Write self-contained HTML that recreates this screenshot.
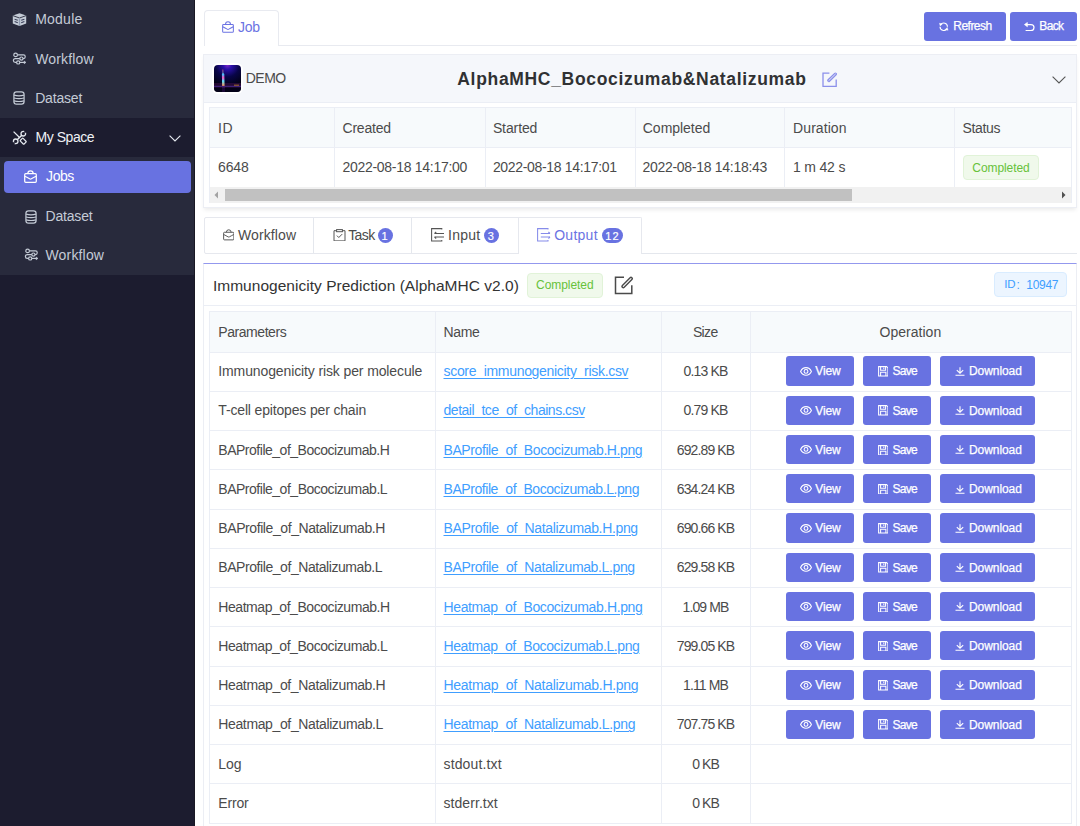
<!DOCTYPE html>
<html><head><meta charset="utf-8">
<style>
*{box-sizing:border-box;margin:0;padding:0}
html,body{width:1080px;height:826px;overflow:hidden;background:#fff;font-family:"Liberation Sans",sans-serif;color:#333;position:relative}
.abs{position:absolute}
.tx{white-space:nowrap}
.btn{background:#6872e1;border-radius:3px}
svg{display:block}
</style></head><body>
<div class="abs" style="left:0;top:0;width:195px;height:826px;background:#1c1c2f"></div>
<div class="abs" style="left:0;top:0;width:194px;height:118px;background:#282a3c"></div>
<div class="abs" style="left:0;top:157px;width:194px;height:118px;background:#282a3c"></div>
<div class="abs" style="left:4px;top:161px;width:187px;height:32px;background:#6872e1;border-radius:4px"></div>
<div class="abs" style="left:193.5px;top:0;width:1.5px;height:826px;background:#191824"></div>
<svg class="abs" style="left:12px;top:12px" width="15" height="15" viewBox="0 0 15 15">
<path d="M7.5 1.2 L14.2 3.6 V11.4 L7.5 14 L0.8 11.4 V3.6 Z" fill="#c4cbd6"/>
<path d="M0.8 3.6 L7.5 6 L14.2 3.6" stroke="#282a3c" stroke-width="0.9" fill="none"/>
<path d="M7.5 6 V14" stroke="#8f9bb0" stroke-width="1.4"/>
<path d="M2.6 7.2 L5.8 8.3 M2.6 9.6 L5.8 10.7 M9.2 8.3 L12.4 7.2 M9.2 10.7 L12.4 9.6" stroke="#3a3f5a" stroke-width="1.1" fill="none"/>
</svg>
<svg class="abs" style="left:12px;top:52px" width="15" height="14" viewBox="0 0 15 14" fill="none" stroke="#c4cbd6" stroke-width="1.2">
<circle cx="3.6" cy="2.9" r="1.8"/><path d="M5.4 2.9 H11.4 a1.85 1.85 0 0 1 0 3.7 H11"/><circle cx="9.4" cy="6.6" r="1.6"/><path d="M7.8 6.6 H3.3 a1.9 1.9 0 0 0 0 3.8 H4.6"/><circle cx="6.2" cy="10.4" r="1.6"/><path d="M7.8 10.4 H13.4"/><path d="M12.2 9 L13.9 10.4 L12.2 11.8 Z" fill="#c4cbd6" stroke-width="0.6"/>
</svg>
<svg class="abs" style="left:13px;top:91px" width="12" height="14" viewBox="0 0 12 14" fill="none" stroke="#c4cbd6" stroke-width="1.2">
<rect x="0.9" y="0.9" width="10.2" height="12.2" rx="2.6"/><path d="M1 4.2 Q6 5.6 11 4.2 M1 7 Q6 8.4 11 7 M1 9.8 Q6 11.2 11 9.8"/>
</svg>
<svg class="abs" style="left:12px;top:130px" width="15" height="15" viewBox="0 0 15 15" fill="none" stroke="#e6eaf0" stroke-width="1.3">
<path d="M1.6 1.6 L7.8 7.8" stroke-width="1.3"/>
<rect x="-2.6" y="-1.9" width="5.2" height="3.8" rx="0.6" transform="translate(11.2 11.2) rotate(45)" stroke-width="1.2"/>
<path d="M5.2 9.8 L9.8 5.2" stroke-width="1.5"/>
<circle cx="11.3" cy="3.7" r="2.3" stroke-width="1.3"/>
<circle cx="3.7" cy="11.3" r="2.3" stroke-width="1.3"/>
<path d="M12.4 2.6 L14.6 0.4 M2.6 12.4 L0.4 14.6" stroke="#1c1c2f" stroke-width="1.8"/>
</svg>
<svg class="abs" style="left:169px;top:134.5px" width="12" height="7" viewBox="0 0 12 7" fill="none" stroke="#e6eaf0" stroke-width="1.1"><path d="M0.6 0.6 L6 6 L11.4 0.6"/></svg>
<svg class="abs" style="left:24px;top:170px" width="13" height="13" viewBox="0 0 13 13" fill="none" stroke="#ffffff" stroke-width="1.25">
<rect x="0.7" y="3.7" width="11.6" height="8.6" rx="1"/><path d="M3.8 3.7 Q3.8 0.9 6.5 0.9 Q9.2 0.9 9.2 3.7"/><path d="M0.8 6.2 Q3.5 7.6 5.6 8.8 Q6.5 9.4 7.4 8.8 Q9.5 7.6 12.2 6.2"/>
</svg>
<svg class="abs" style="left:24.5px;top:209.5px" width="12" height="14" viewBox="0 0 12 14" fill="none" stroke="#c4cbd6" stroke-width="1.2">
<rect x="0.9" y="0.9" width="10.2" height="12.2" rx="2.6"/><path d="M1 4.2 Q6 5.6 11 4.2 M1 7 Q6 8.4 11 7 M1 9.8 Q6 11.2 11 9.8"/>
</svg>
<svg class="abs" style="left:24px;top:248px" width="15" height="14" viewBox="0 0 15 14" fill="none" stroke="#c4cbd6" stroke-width="1.2">
<circle cx="3.6" cy="2.9" r="1.8"/><path d="M5.4 2.9 H11.4 a1.85 1.85 0 0 1 0 3.7 H11"/><circle cx="9.4" cy="6.6" r="1.6"/><path d="M7.8 6.6 H3.3 a1.9 1.9 0 0 0 0 3.8 H4.6"/><circle cx="6.2" cy="10.4" r="1.6"/><path d="M7.8 10.4 H13.4"/><path d="M12.2 9 L13.9 10.4 L12.2 11.8 Z" fill="#c4cbd6" stroke-width="0.6"/>
</svg>
<span class="abs tx" style="left:35.20px;top:11.65px;font-size:14px;line-height:14px;color:#c4cbd6;letter-spacing:0.230px;font-weight:400;">Module</span>
<span class="abs tx" style="left:35.20px;top:51.65px;font-size:14px;line-height:14px;color:#c4cbd6;letter-spacing:0.161px;font-weight:400;">Workflow</span>
<span class="abs tx" style="left:35.20px;top:90.85px;font-size:14px;line-height:14px;color:#c4cbd6;letter-spacing:-0.179px;font-weight:400;">Dataset</span>
<span class="abs tx" style="left:35.50px;top:130.05px;font-size:14px;line-height:14px;color:#eef1f5;letter-spacing:-0.456px;font-weight:400;">My Space</span>
<span class="abs tx" style="left:46.10px;top:169.15px;font-size:14px;line-height:14px;color:#ffffff;letter-spacing:-0.445px;font-weight:400;">Jobs</span>
<span class="abs tx" style="left:45.50px;top:208.65px;font-size:14px;line-height:14px;color:#c4cbd6;letter-spacing:-0.179px;font-weight:400;">Dataset</span>
<span class="abs tx" style="left:45.50px;top:248.15px;font-size:14px;line-height:14px;color:#c4cbd6;letter-spacing:0.161px;font-weight:400;">Workflow</span>
<div class="abs" style="left:203.5px;top:9.5px;width:75px;height:36.5px;border:1px solid #e8eaf0;border-bottom:none;border-radius:4px 4px 0 0;background:#fff"></div>
<div class="abs" style="left:278px;top:45px;width:799px;height:1px;background:#e8eaf0"></div>
<svg class="abs" style="left:222px;top:21px" width="12" height="12" viewBox="0 0 13 13" fill="none" stroke="#6b73e3" stroke-width="1.1">
<rect x="0.7" y="3.7" width="11.6" height="8.6" rx="1"/><path d="M3.8 3.7 Q3.8 0.9 6.5 0.9 Q9.2 0.9 9.2 3.7"/><path d="M0.8 6.2 Q3.5 7.6 5.6 8.8 Q6.5 9.4 7.4 8.8 Q9.5 7.6 12.2 6.2"/>
</svg>
<span class="abs tx" style="left:238.10px;top:19.85px;font-size:14px;line-height:14px;color:#6b73e3;letter-spacing:-0.326px;font-weight:400;">Job</span>
<div class="abs btn" style="left:924px;top:12px;width:82px;height:29px"></div>
<svg class="abs" style="left:939.3px;top:21.8px" width="9.5" height="9.5" viewBox="0 0 10 10" fill="none" stroke="#fff" stroke-width="1.2"><path d="M1.81 2.76 A3.9 3.9 0 0 1 8.9 5"/><path d="M8.19 7.24 A3.9 3.9 0 0 1 1.1 5"/><path d="M0.4 1.3 L3.6 1.9 L1.3 4.3 Z" fill="#fff" stroke-width="0.4"/><path d="M9.6 8.7 L6.4 8.1 L8.7 5.7 Z" fill="#fff" stroke-width="0.4"/></svg>
<span class="abs tx" style="left:953.31px;top:20.04px;font-size:12px;line-height:12px;color:#fff;letter-spacing:-0.523px;font-weight:400;-webkit-text-stroke:0.25px #fff">Refresh</span>
<div class="abs btn" style="left:1009.5px;top:12px;width:67.5px;height:29px"></div>
<svg class="abs" style="left:1024px;top:21.5px" width="11" height="9.5" viewBox="0 0 11 9.5" fill="none" stroke="#fff" stroke-width="1.25"><path d="M3 2.6 H7 a3 3 0 0 1 0 6 H1.6"/><path d="M0.4 2.6 L3.4 0.4 V4.8 Z" fill="#fff" stroke-width="0.6"/></svg>
<span class="abs tx" style="left:1039.31px;top:20.04px;font-size:12px;line-height:12px;color:#fff;letter-spacing:-0.629px;font-weight:400;-webkit-text-stroke:0.25px #fff">Back</span>
<div class="abs" style="left:203px;top:54px;width:873.5px;height:153.5px;background:#fff;border:1px solid #eceef4;box-shadow:0 3px 4px -1px rgba(0,0,0,.08)"></div>
<div class="abs" style="left:204px;top:55px;width:871.5px;height:47.5px;background:#f5f7fb;border-bottom:1px solid #ebeef5"></div>
<div class="abs" style="left:212px;top:63px;width:31px;height:31px;border-radius:6px;background:#fff"></div>
<svg class="abs" style="left:214px;top:65px;border-radius:4px" width="27" height="27" viewBox="0 0 27 27">
<defs><radialGradient id="sky" cx="0.5" cy="0" r="0.8"><stop offset="0" stop-color="#7a28c8"/><stop offset="0.2" stop-color="#2a10a8"/><stop offset="0.55" stop-color="#080548"/><stop offset="1" stop-color="#020114"/></radialGradient>
<linearGradient id="tw" x1="0" y1="0" x2="0" y2="1"><stop offset="0" stop-color="#ff7070"/><stop offset="0.3" stop-color="#40c0ff"/><stop offset="0.5" stop-color="#ff50c0"/><stop offset="0.7" stop-color="#50e0ff"/><stop offset="1" stop-color="#ff9050"/></linearGradient></defs>
<rect width="27" height="27" fill="url(#sky)"/>
<rect x="0" y="18" width="27" height="5" fill="#40104a" opacity=".55"/>
<path d="M8.6 4.5 L9.2 4.5 L9.4 8 L10.3 9 L10.6 21 L8.1 21 L7.9 9 L8.5 8 Z" fill="url(#tw)"/>
<rect x="0" y="20.8" width="27" height="1" fill="#5030a0" opacity=".8"/>
<rect x="20" y="19.6" width="5" height="1.2" fill="#c08030" opacity=".7"/>
<rect x="8" y="22" width="3" height="5" fill="#6a20a0" opacity=".6"/>
<rect x="0" y="22.5" width="27" height="4.5" fill="#04021a" opacity=".65"/>
</svg>
<span class="abs tx" style="left:245.70px;top:71.35px;font-size:14px;line-height:14px;color:#4b4b4b;letter-spacing:-0.475px;font-weight:400;">DEMO</span>
<span class="abs tx" style="left:457.30px;top:70.69px;font-size:17.5px;line-height:17.5px;color:#303133;letter-spacing:0.675px;font-weight:700;">AlphaMHC_Bococizumab&amp;Natalizumab</span>
<svg class="abs" style="left:821.5px;top:72px" width="15" height="15" viewBox="0 0 15 15" fill="none" stroke="#8b90ea" stroke-width="1.3"><path d="M7.4 1.1 H1 V14.3 H14.2 V7.6"/><path d="M6.8 8.5 L13.4 2.1" stroke-width="3.2" stroke-linecap="round"/><path d="M6.8 8.5 L13.4 2.1" stroke="#f5f7fb" stroke-width="0.8" stroke-linecap="round"/></svg>
<svg class="abs" style="left:1051.5px;top:75.5px" width="14" height="8" viewBox="0 0 14 8" fill="none" stroke="#555" stroke-width="1.1"><path d="M0.6 0.6 L7 7 L13.4 0.6"/></svg>
<div class="abs" style="left:209px;top:107px;width:862.5px;height:40.30000000000001px;background:#f7fafc"></div>
<div class="abs" style="left:209px;top:107px;width:862.5px;height:96.19999999999999px;border:1px solid #ebeef5"></div>
<div class="abs" style="left:209px;top:147.3px;width:862.5px;height:1px;background:#ebeef5"></div>
<div class="abs" style="left:334.4px;top:107px;width:1px;height:79.69999999999999px;background:#ebeef5"></div>
<div class="abs" style="left:484.5px;top:107px;width:1px;height:79.69999999999999px;background:#ebeef5"></div>
<div class="abs" style="left:634.7px;top:107px;width:1px;height:79.69999999999999px;background:#ebeef5"></div>
<div class="abs" style="left:784.3px;top:107px;width:1px;height:79.69999999999999px;background:#ebeef5"></div>
<div class="abs" style="left:953.6px;top:107px;width:1px;height:79.69999999999999px;background:#ebeef5"></div>
<div class="abs" style="left:210px;top:186.7px;width:861px;height:16px;background:#f1f1f1"></div>
<div class="abs" style="left:225px;top:189px;width:626.5px;height:12px;background:#c1c1c1"></div>
<svg class="abs" style="left:213px;top:191px" width="6" height="8" viewBox="0 0 6 8"><path d="M5 0.5 L1.5 4 L5 7.5Z" fill="#a3a3a3"/></svg>
<svg class="abs" style="left:1061px;top:191px" width="6" height="8" viewBox="0 0 6 8"><path d="M1 0.5 L4.5 4 L1 7.5Z" fill="#505050"/></svg>
<span class="abs tx" style="left:218.10px;top:121.05px;font-size:14px;line-height:14px;color:#4b4b4b;letter-spacing:0.550px;font-weight:400;">ID</span>
<span class="abs tx" style="left:342.50px;top:121.05px;font-size:14px;line-height:14px;color:#4b4b4b;letter-spacing:-0.216px;font-weight:400;">Created</span>
<span class="abs tx" style="left:492.90px;top:121.05px;font-size:14px;line-height:14px;color:#4b4b4b;letter-spacing:-0.106px;font-weight:400;">Started</span>
<span class="abs tx" style="left:642.80px;top:121.05px;font-size:14px;line-height:14px;color:#4b4b4b;letter-spacing:-0.034px;font-weight:400;">Completed</span>
<span class="abs tx" style="left:793.10px;top:121.05px;font-size:14px;line-height:14px;color:#4b4b4b;letter-spacing:0.072px;font-weight:400;">Duration</span>
<span class="abs tx" style="left:962.50px;top:121.05px;font-size:14px;line-height:14px;color:#4b4b4b;letter-spacing:-0.334px;font-weight:400;">Status</span>
<span class="abs tx" style="left:218.10px;top:160.45px;font-size:14px;line-height:14px;color:#4b4b4b;letter-spacing:-0.189px;font-weight:400;">6648</span>
<span class="abs tx" style="left:342.50px;top:160.45px;font-size:14px;line-height:14px;color:#4b4b4b;letter-spacing:-0.289px;font-weight:400;">2022-08-18 14:17:00</span>
<span class="abs tx" style="left:492.90px;top:160.45px;font-size:14px;line-height:14px;color:#4b4b4b;letter-spacing:-0.326px;font-weight:400;">2022-08-18 14:17:01</span>
<span class="abs tx" style="left:642.50px;top:160.45px;font-size:14px;line-height:14px;color:#4b4b4b;letter-spacing:-0.289px;font-weight:400;">2022-08-18 14:18:43</span>
<span class="abs tx" style="left:793.10px;top:160.45px;font-size:14px;line-height:14px;color:#4b4b4b;letter-spacing:-0.200px;font-weight:400;">1 m 42 s</span>
<div class="abs" style="left:962.8px;top:155px;width:76px;height:25px;border:1px solid #e1f3d8;background:#f0f9eb;border-radius:4px"></div>
<span class="abs tx" style="left:972.31px;top:162.14px;font-size:12px;line-height:12px;color:#67c23a;letter-spacing:-0.073px;font-weight:400;">Completed</span>
<div class="abs" style="left:203.5px;top:217px;width:315px;height:36.5px;border:1px solid #e6e8ee;border-radius:2px 0 0 2px;background:#fff"></div>
<div class="abs" style="left:313px;top:218px;width:1px;height:35px;background:#e4e7ed"></div>
<div class="abs" style="left:411px;top:218px;width:1px;height:35px;background:#e4e7ed"></div>
<div class="abs" style="left:517.5px;top:217px;width:124px;height:37px;border:1px solid #e6e8ee;border-bottom:none;border-radius:0 2px 0 0;background:#fff"></div>
<div class="abs" style="left:641.5px;top:253px;width:435.5px;height:1px;background:#e4e7ed"></div>
<svg class="abs" style="left:222.5px;top:229.3px" width="11.5" height="11.5" viewBox="0 0 13 13" fill="none" stroke="#555" stroke-width="1.1">
<rect x="0.7" y="3.7" width="11.6" height="8.6" rx="1"/><path d="M3.8 3.7 Q3.8 0.9 6.5 0.9 Q9.2 0.9 9.2 3.7"/><path d="M0.8 6.2 Q3.5 7.6 5.6 8.8 Q6.5 9.4 7.4 8.8 Q9.5 7.6 12.2 6.2"/>
</svg>
<span class="abs tx" style="left:238.00px;top:228.15px;font-size:14px;line-height:14px;color:#4b4b4b;letter-spacing:0.111px;font-weight:400;">Workflow</span>
<svg class="abs" style="left:332.5px;top:228.8px" width="13" height="12.5" viewBox="0 0 13 12.5" fill="none" stroke="#555" stroke-width="1"><path d="M3.6 1.7 H1 V11.9 H12 V1.7 H9.4"/><rect x="3.6" y="0.6" width="5.8" height="2.1"/><path d="M3.9 6.6 L5.8 8.5 L9.2 5.1"/></svg>
<span class="abs tx" style="left:348.20px;top:228.15px;font-size:14px;line-height:14px;color:#4b4b4b;letter-spacing:-0.574px;font-weight:400;">Task</span>
<div class="abs" style="left:377.7px;top:228.4px;width:15.2px;height:14.5px;border-radius:8px;background:#6872e1"></div>
<span class="abs tx" style="left:381.57px;top:230.69px;font-size:11px;line-height:11px;color:#fff;letter-spacing:0.000px;font-weight:400;-webkit-text-stroke:0.2px #fff">1</span>
<svg class="abs" style="left:430.5px;top:228.3px" width="14" height="14" viewBox="0 0 14 14" fill="none" stroke="#555" stroke-width="1.05"><path d="M10.8 1.6 V0.6 H0.6 V12.9 H10.8 V11.9"/><path d="M3.6 5.5 H13 M3.6 9 H13"/><path d="M5.2 4 L3.6 5.5 M5.2 10.5 L3.6 9"/></svg>
<span class="abs tx" style="left:448.00px;top:228.15px;font-size:14px;line-height:14px;color:#4b4b4b;letter-spacing:0.252px;font-weight:400;">Input</span>
<div class="abs" style="left:484px;top:228.4px;width:15px;height:14.5px;border-radius:8px;background:#6872e1"></div>
<span class="abs tx" style="left:487.77px;top:230.69px;font-size:11px;line-height:11px;color:#fff;letter-spacing:0.000px;font-weight:400;-webkit-text-stroke:0.2px #fff">3</span>
<svg class="abs" style="left:536.7px;top:228.3px" width="14" height="14" viewBox="0 0 14 14" fill="none" stroke="#868cea" stroke-width="1.05"><path d="M11 1.6 V0.6 H0.6 V12.9 H11 V11.9"/><path d="M3.8 5.5 H13 M3.8 9 H13"/><path d="M11.4 4 L13 5.5 M11.4 10.5 L13 9"/></svg>
<span class="abs tx" style="left:554.20px;top:228.15px;font-size:14px;line-height:14px;color:#6b73e3;letter-spacing:0.261px;font-weight:400;">Output</span>
<div class="abs" style="left:601.9px;top:228.4px;width:21px;height:14.5px;border-radius:8px;background:#6872e1"></div>
<span class="abs tx" style="left:605.17px;top:230.69px;font-size:11px;line-height:11px;color:#fff;letter-spacing:1.254px;font-weight:400;-webkit-text-stroke:0.2px #fff">12</span>
<div class="abs" style="left:203px;top:262.5px;width:874px;height:600px;background:#fff;border:1px solid #eceef4;border-top:1.5px solid #9398ee"></div>
<div class="abs" style="left:203px;top:305px;width:874px;height:1px;background:#ebeef5"></div>
<span class="abs tx" style="left:212.91px;top:277.88px;font-size:15.5px;line-height:15.5px;color:#333;letter-spacing:0.025px;font-weight:400;">Immunogenicity Prediction (AlphaMHC v2.0)</span>
<div class="abs" style="left:526.7px;top:273.3px;width:76.3px;height:24.6px;border:1px solid #e1f3d8;background:#f0f9eb;border-radius:4px"></div>
<span class="abs tx" style="left:536.11px;top:279.44px;font-size:12px;line-height:12px;color:#67c23a;letter-spacing:-0.073px;font-weight:400;">Completed</span>
<svg class="abs" style="left:614px;top:276px" width="20" height="19" viewBox="0 0 20 19" fill="none" stroke="#4a4a4a" stroke-width="1.5"><path d="M10 1.2 H1.5 V17.6 H17.8 V9.3"/><path d="M9.3 10.4 L17 2.6" stroke-width="3.9" stroke-linecap="round"/><path d="M9.3 10.4 L17 2.6" stroke="#fff" stroke-width="1.1" stroke-linecap="round"/></svg>
<div class="abs" style="left:994.2px;top:272.1px;width:73.3px;height:25px;border:1px solid #d9ecff;background:#ecf5ff;border-radius:4px"></div>
<span class="abs tx" style="left:1004.34px;top:279.47px;font-size:11.5px;line-height:11.5px;color:#409eff;letter-spacing:-0.343px;font-weight:400;">ID</span>
<span class="abs tx" style="left:1016.51px;top:279.04px;font-size:12px;line-height:12px;color:#409eff;letter-spacing:0.528px;font-weight:400;">:</span>
<span class="abs tx" style="left:1026.31px;top:279.04px;font-size:12px;line-height:12px;color:#409eff;letter-spacing:-0.301px;font-weight:400;">10947</span>
<div class="abs" style="left:209px;top:311px;width:862.5px;height:40.5px;background:#f7fafc"></div>
<div class="abs" style="left:209px;top:311px;width:862.5px;height:512.5px;border:1px solid #ebeef5"></div>
<div class="abs" style="left:209px;top:351.50px;width:862.5px;height:1px;background:#ebeef5"></div>
<div class="abs" style="left:209px;top:390.75px;width:862.5px;height:1px;background:#ebeef5"></div>
<div class="abs" style="left:209px;top:430.00px;width:862.5px;height:1px;background:#ebeef5"></div>
<div class="abs" style="left:209px;top:469.25px;width:862.5px;height:1px;background:#ebeef5"></div>
<div class="abs" style="left:209px;top:508.50px;width:862.5px;height:1px;background:#ebeef5"></div>
<div class="abs" style="left:209px;top:547.75px;width:862.5px;height:1px;background:#ebeef5"></div>
<div class="abs" style="left:209px;top:587.00px;width:862.5px;height:1px;background:#ebeef5"></div>
<div class="abs" style="left:209px;top:626.25px;width:862.5px;height:1px;background:#ebeef5"></div>
<div class="abs" style="left:209px;top:665.50px;width:862.5px;height:1px;background:#ebeef5"></div>
<div class="abs" style="left:209px;top:704.75px;width:862.5px;height:1px;background:#ebeef5"></div>
<div class="abs" style="left:209px;top:744.00px;width:862.5px;height:1px;background:#ebeef5"></div>
<div class="abs" style="left:209px;top:783.25px;width:862.5px;height:1px;background:#ebeef5"></div>
<div class="abs" style="left:435px;top:311px;width:1px;height:511.5px;background:#ebeef5"></div>
<div class="abs" style="left:661px;top:311px;width:1px;height:511.5px;background:#ebeef5"></div>
<div class="abs" style="left:750px;top:311px;width:1px;height:511.5px;background:#ebeef5"></div>
<span class="abs tx" style="left:218.30px;top:324.95px;font-size:14px;line-height:14px;color:#4b4b4b;letter-spacing:-0.446px;font-weight:400;">Parameters</span>
<span class="abs tx" style="left:443.50px;top:324.95px;font-size:14px;line-height:14px;color:#4b4b4b;letter-spacing:-0.315px;font-weight:400;">Name</span>
<span class="abs tx" style="left:692.95px;top:324.95px;font-size:14px;line-height:14px;color:#4b4b4b;letter-spacing:-0.659px;font-weight:400;">Size</span>
<span class="abs tx" style="left:879.60px;top:324.95px;font-size:14px;line-height:14px;color:#4b4b4b;letter-spacing:0.013px;font-weight:400;">Operation</span>
<span class="abs tx" style="left:218.30px;top:364.15px;font-size:14px;line-height:14px;color:#4b4b4b;letter-spacing:-0.120px;font-weight:400;">Immunogenicity risk per molecule</span>
<span class="abs tx" style="left:443.50px;top:364.15px;font-size:14px;line-height:14px;color:#409eff;letter-spacing:-0.308px;font-weight:400;text-decoration:underline;text-underline-offset:1.5px">score_immunogenicity_risk.csv</span>
<span class="abs tx" style="left:683.58px;top:364.15px;font-size:14px;line-height:14px;color:#4b4b4b;letter-spacing:-0.854px;font-weight:400;">0.13 KB</span>
<div class="abs btn" style="left:786px;top:356.30px;width:68px;height:29.3px"></div>
<svg class="abs" style="left:799.6px;top:366.60px" width="12" height="9" viewBox="0 0 12 9" fill="none" stroke="#fff" stroke-width="1.1"><path d="M0.6 4.4 C2 1.3 4 0.6 6 0.6 C8 0.6 10 1.3 11.4 4.4 C10 7.5 8 8.2 6 8.2 C4 8.2 2 7.5 0.6 4.4Z"/><circle cx="6" cy="4.4" r="1.9"/></svg>
<span class="abs tx" style="left:815.31px;top:365.44px;font-size:12px;line-height:12px;color:#fff;letter-spacing:-0.181px;font-weight:400;-webkit-text-stroke:0.25px #fff">View</span>
<div class="abs btn" style="left:863px;top:356.30px;width:68px;height:29.3px"></div>
<svg class="abs" style="left:877.7px;top:366.00px" width="10.5" height="10.5" viewBox="0 0 10.5 10.5" fill="none" stroke="#fff" stroke-width="1.05"><path d="M0.6 0.6 H8.6 L9.9 1.9 V9.9 H0.6Z"/><path d="M2.6 0.6 V4.2 H7.6 V0.6 M2.6 9.9 V6.3 H7.9 V9.9"/><path d="M5.8 1.6 V3.2"/></svg>
<span class="abs tx" style="left:892.41px;top:365.44px;font-size:12px;line-height:12px;color:#fff;letter-spacing:-0.672px;font-weight:400;-webkit-text-stroke:0.25px #fff">Save</span>
<div class="abs btn" style="left:940px;top:356.30px;width:95px;height:29.3px"></div>
<svg class="abs" style="left:954.6px;top:366.80px" width="10" height="9" viewBox="0 0 10 9" fill="none" stroke="#fff" stroke-width="1.1"><path d="M5 0.3 V5.8 M1.8 3.2 L5 6.2 L8.2 3.2 M0.5 8.3 H9.5"/></svg>
<span class="abs tx" style="left:969.01px;top:365.44px;font-size:12px;line-height:12px;color:#fff;letter-spacing:-0.075px;font-weight:400;-webkit-text-stroke:0.25px #fff">Download</span>
<span class="abs tx" style="left:218.30px;top:403.40px;font-size:14px;line-height:14px;color:#4b4b4b;letter-spacing:-0.159px;font-weight:400;">T-cell epitopes per chain</span>
<span class="abs tx" style="left:443.50px;top:403.40px;font-size:14px;line-height:14px;color:#409eff;letter-spacing:-0.473px;font-weight:400;text-decoration:underline;text-underline-offset:1.5px">detail_tce_of_chains.csv</span>
<span class="abs tx" style="left:683.58px;top:403.40px;font-size:14px;line-height:14px;color:#4b4b4b;letter-spacing:-0.854px;font-weight:400;">0.79 KB</span>
<div class="abs btn" style="left:786px;top:395.55px;width:68px;height:29.3px"></div>
<svg class="abs" style="left:799.6px;top:405.85px" width="12" height="9" viewBox="0 0 12 9" fill="none" stroke="#fff" stroke-width="1.1"><path d="M0.6 4.4 C2 1.3 4 0.6 6 0.6 C8 0.6 10 1.3 11.4 4.4 C10 7.5 8 8.2 6 8.2 C4 8.2 2 7.5 0.6 4.4Z"/><circle cx="6" cy="4.4" r="1.9"/></svg>
<span class="abs tx" style="left:815.31px;top:404.69px;font-size:12px;line-height:12px;color:#fff;letter-spacing:-0.181px;font-weight:400;-webkit-text-stroke:0.25px #fff">View</span>
<div class="abs btn" style="left:863px;top:395.55px;width:68px;height:29.3px"></div>
<svg class="abs" style="left:877.7px;top:405.25px" width="10.5" height="10.5" viewBox="0 0 10.5 10.5" fill="none" stroke="#fff" stroke-width="1.05"><path d="M0.6 0.6 H8.6 L9.9 1.9 V9.9 H0.6Z"/><path d="M2.6 0.6 V4.2 H7.6 V0.6 M2.6 9.9 V6.3 H7.9 V9.9"/><path d="M5.8 1.6 V3.2"/></svg>
<span class="abs tx" style="left:892.41px;top:404.69px;font-size:12px;line-height:12px;color:#fff;letter-spacing:-0.672px;font-weight:400;-webkit-text-stroke:0.25px #fff">Save</span>
<div class="abs btn" style="left:940px;top:395.55px;width:95px;height:29.3px"></div>
<svg class="abs" style="left:954.6px;top:406.05px" width="10" height="9" viewBox="0 0 10 9" fill="none" stroke="#fff" stroke-width="1.1"><path d="M5 0.3 V5.8 M1.8 3.2 L5 6.2 L8.2 3.2 M0.5 8.3 H9.5"/></svg>
<span class="abs tx" style="left:969.01px;top:404.69px;font-size:12px;line-height:12px;color:#fff;letter-spacing:-0.075px;font-weight:400;-webkit-text-stroke:0.25px #fff">Download</span>
<span class="abs tx" style="left:218.30px;top:442.65px;font-size:14px;line-height:14px;color:#4b4b4b;letter-spacing:-0.483px;font-weight:400;">BAProfile_of_Bococizumab.H</span>
<span class="abs tx" style="left:443.50px;top:442.65px;font-size:14px;line-height:14px;color:#409eff;letter-spacing:-0.407px;font-weight:400;text-decoration:underline;text-underline-offset:1.5px">BAProfile_of_Bococizumab.H.png</span>
<span class="abs tx" style="left:676.73px;top:442.65px;font-size:14px;line-height:14px;color:#4b4b4b;letter-spacing:-0.872px;font-weight:400;">692.89 KB</span>
<div class="abs btn" style="left:786px;top:434.80px;width:68px;height:29.3px"></div>
<svg class="abs" style="left:799.6px;top:445.10px" width="12" height="9" viewBox="0 0 12 9" fill="none" stroke="#fff" stroke-width="1.1"><path d="M0.6 4.4 C2 1.3 4 0.6 6 0.6 C8 0.6 10 1.3 11.4 4.4 C10 7.5 8 8.2 6 8.2 C4 8.2 2 7.5 0.6 4.4Z"/><circle cx="6" cy="4.4" r="1.9"/></svg>
<span class="abs tx" style="left:815.31px;top:443.94px;font-size:12px;line-height:12px;color:#fff;letter-spacing:-0.181px;font-weight:400;-webkit-text-stroke:0.25px #fff">View</span>
<div class="abs btn" style="left:863px;top:434.80px;width:68px;height:29.3px"></div>
<svg class="abs" style="left:877.7px;top:444.50px" width="10.5" height="10.5" viewBox="0 0 10.5 10.5" fill="none" stroke="#fff" stroke-width="1.05"><path d="M0.6 0.6 H8.6 L9.9 1.9 V9.9 H0.6Z"/><path d="M2.6 0.6 V4.2 H7.6 V0.6 M2.6 9.9 V6.3 H7.9 V9.9"/><path d="M5.8 1.6 V3.2"/></svg>
<span class="abs tx" style="left:892.41px;top:443.94px;font-size:12px;line-height:12px;color:#fff;letter-spacing:-0.672px;font-weight:400;-webkit-text-stroke:0.25px #fff">Save</span>
<div class="abs btn" style="left:940px;top:434.80px;width:95px;height:29.3px"></div>
<svg class="abs" style="left:954.6px;top:445.30px" width="10" height="9" viewBox="0 0 10 9" fill="none" stroke="#fff" stroke-width="1.1"><path d="M5 0.3 V5.8 M1.8 3.2 L5 6.2 L8.2 3.2 M0.5 8.3 H9.5"/></svg>
<span class="abs tx" style="left:969.01px;top:443.94px;font-size:12px;line-height:12px;color:#fff;letter-spacing:-0.075px;font-weight:400;-webkit-text-stroke:0.25px #fff">Download</span>
<span class="abs tx" style="left:218.30px;top:481.90px;font-size:14px;line-height:14px;color:#4b4b4b;letter-spacing:-0.482px;font-weight:400;">BAProfile_of_Bococizumab.L</span>
<span class="abs tx" style="left:443.50px;top:481.90px;font-size:14px;line-height:14px;color:#409eff;letter-spacing:-0.436px;font-weight:400;text-decoration:underline;text-underline-offset:1.5px">BAProfile_of_Bococizumab.L.png</span>
<span class="abs tx" style="left:676.73px;top:481.90px;font-size:14px;line-height:14px;color:#4b4b4b;letter-spacing:-0.872px;font-weight:400;">634.24 KB</span>
<div class="abs btn" style="left:786px;top:474.05px;width:68px;height:29.3px"></div>
<svg class="abs" style="left:799.6px;top:484.35px" width="12" height="9" viewBox="0 0 12 9" fill="none" stroke="#fff" stroke-width="1.1"><path d="M0.6 4.4 C2 1.3 4 0.6 6 0.6 C8 0.6 10 1.3 11.4 4.4 C10 7.5 8 8.2 6 8.2 C4 8.2 2 7.5 0.6 4.4Z"/><circle cx="6" cy="4.4" r="1.9"/></svg>
<span class="abs tx" style="left:815.31px;top:483.19px;font-size:12px;line-height:12px;color:#fff;letter-spacing:-0.181px;font-weight:400;-webkit-text-stroke:0.25px #fff">View</span>
<div class="abs btn" style="left:863px;top:474.05px;width:68px;height:29.3px"></div>
<svg class="abs" style="left:877.7px;top:483.75px" width="10.5" height="10.5" viewBox="0 0 10.5 10.5" fill="none" stroke="#fff" stroke-width="1.05"><path d="M0.6 0.6 H8.6 L9.9 1.9 V9.9 H0.6Z"/><path d="M2.6 0.6 V4.2 H7.6 V0.6 M2.6 9.9 V6.3 H7.9 V9.9"/><path d="M5.8 1.6 V3.2"/></svg>
<span class="abs tx" style="left:892.41px;top:483.19px;font-size:12px;line-height:12px;color:#fff;letter-spacing:-0.672px;font-weight:400;-webkit-text-stroke:0.25px #fff">Save</span>
<div class="abs btn" style="left:940px;top:474.05px;width:95px;height:29.3px"></div>
<svg class="abs" style="left:954.6px;top:484.55px" width="10" height="9" viewBox="0 0 10 9" fill="none" stroke="#fff" stroke-width="1.1"><path d="M5 0.3 V5.8 M1.8 3.2 L5 6.2 L8.2 3.2 M0.5 8.3 H9.5"/></svg>
<span class="abs tx" style="left:969.01px;top:483.19px;font-size:12px;line-height:12px;color:#fff;letter-spacing:-0.075px;font-weight:400;-webkit-text-stroke:0.25px #fff">Download</span>
<span class="abs tx" style="left:218.30px;top:521.15px;font-size:14px;line-height:14px;color:#4b4b4b;letter-spacing:-0.412px;font-weight:400;">BAProfile_of_Natalizumab.H</span>
<span class="abs tx" style="left:443.50px;top:521.15px;font-size:14px;line-height:14px;color:#409eff;letter-spacing:-0.346px;font-weight:400;text-decoration:underline;text-underline-offset:1.5px">BAProfile_of_Natalizumab.H.png</span>
<span class="abs tx" style="left:676.73px;top:521.15px;font-size:14px;line-height:14px;color:#4b4b4b;letter-spacing:-0.872px;font-weight:400;">690.66 KB</span>
<div class="abs btn" style="left:786px;top:513.30px;width:68px;height:29.3px"></div>
<svg class="abs" style="left:799.6px;top:523.60px" width="12" height="9" viewBox="0 0 12 9" fill="none" stroke="#fff" stroke-width="1.1"><path d="M0.6 4.4 C2 1.3 4 0.6 6 0.6 C8 0.6 10 1.3 11.4 4.4 C10 7.5 8 8.2 6 8.2 C4 8.2 2 7.5 0.6 4.4Z"/><circle cx="6" cy="4.4" r="1.9"/></svg>
<span class="abs tx" style="left:815.31px;top:522.44px;font-size:12px;line-height:12px;color:#fff;letter-spacing:-0.181px;font-weight:400;-webkit-text-stroke:0.25px #fff">View</span>
<div class="abs btn" style="left:863px;top:513.30px;width:68px;height:29.3px"></div>
<svg class="abs" style="left:877.7px;top:523.00px" width="10.5" height="10.5" viewBox="0 0 10.5 10.5" fill="none" stroke="#fff" stroke-width="1.05"><path d="M0.6 0.6 H8.6 L9.9 1.9 V9.9 H0.6Z"/><path d="M2.6 0.6 V4.2 H7.6 V0.6 M2.6 9.9 V6.3 H7.9 V9.9"/><path d="M5.8 1.6 V3.2"/></svg>
<span class="abs tx" style="left:892.41px;top:522.44px;font-size:12px;line-height:12px;color:#fff;letter-spacing:-0.672px;font-weight:400;-webkit-text-stroke:0.25px #fff">Save</span>
<div class="abs btn" style="left:940px;top:513.30px;width:95px;height:29.3px"></div>
<svg class="abs" style="left:954.6px;top:523.80px" width="10" height="9" viewBox="0 0 10 9" fill="none" stroke="#fff" stroke-width="1.1"><path d="M5 0.3 V5.8 M1.8 3.2 L5 6.2 L8.2 3.2 M0.5 8.3 H9.5"/></svg>
<span class="abs tx" style="left:969.01px;top:522.44px;font-size:12px;line-height:12px;color:#fff;letter-spacing:-0.075px;font-weight:400;-webkit-text-stroke:0.25px #fff">Download</span>
<span class="abs tx" style="left:218.30px;top:560.40px;font-size:14px;line-height:14px;color:#4b4b4b;letter-spacing:-0.435px;font-weight:400;">BAProfile_of_Natalizumab.L</span>
<span class="abs tx" style="left:443.50px;top:560.40px;font-size:14px;line-height:14px;color:#409eff;letter-spacing:-0.371px;font-weight:400;text-decoration:underline;text-underline-offset:1.5px">BAProfile_of_Natalizumab.L.png</span>
<span class="abs tx" style="left:676.73px;top:560.40px;font-size:14px;line-height:14px;color:#4b4b4b;letter-spacing:-0.872px;font-weight:400;">629.58 KB</span>
<div class="abs btn" style="left:786px;top:552.55px;width:68px;height:29.3px"></div>
<svg class="abs" style="left:799.6px;top:562.85px" width="12" height="9" viewBox="0 0 12 9" fill="none" stroke="#fff" stroke-width="1.1"><path d="M0.6 4.4 C2 1.3 4 0.6 6 0.6 C8 0.6 10 1.3 11.4 4.4 C10 7.5 8 8.2 6 8.2 C4 8.2 2 7.5 0.6 4.4Z"/><circle cx="6" cy="4.4" r="1.9"/></svg>
<span class="abs tx" style="left:815.31px;top:561.69px;font-size:12px;line-height:12px;color:#fff;letter-spacing:-0.181px;font-weight:400;-webkit-text-stroke:0.25px #fff">View</span>
<div class="abs btn" style="left:863px;top:552.55px;width:68px;height:29.3px"></div>
<svg class="abs" style="left:877.7px;top:562.25px" width="10.5" height="10.5" viewBox="0 0 10.5 10.5" fill="none" stroke="#fff" stroke-width="1.05"><path d="M0.6 0.6 H8.6 L9.9 1.9 V9.9 H0.6Z"/><path d="M2.6 0.6 V4.2 H7.6 V0.6 M2.6 9.9 V6.3 H7.9 V9.9"/><path d="M5.8 1.6 V3.2"/></svg>
<span class="abs tx" style="left:892.41px;top:561.69px;font-size:12px;line-height:12px;color:#fff;letter-spacing:-0.672px;font-weight:400;-webkit-text-stroke:0.25px #fff">Save</span>
<div class="abs btn" style="left:940px;top:552.55px;width:95px;height:29.3px"></div>
<svg class="abs" style="left:954.6px;top:563.05px" width="10" height="9" viewBox="0 0 10 9" fill="none" stroke="#fff" stroke-width="1.1"><path d="M5 0.3 V5.8 M1.8 3.2 L5 6.2 L8.2 3.2 M0.5 8.3 H9.5"/></svg>
<span class="abs tx" style="left:969.01px;top:561.69px;font-size:12px;line-height:12px;color:#fff;letter-spacing:-0.075px;font-weight:400;-webkit-text-stroke:0.25px #fff">Download</span>
<span class="abs tx" style="left:218.30px;top:599.65px;font-size:14px;line-height:14px;color:#4b4b4b;letter-spacing:-0.446px;font-weight:400;">Heatmap_of_Bococizumab.H</span>
<span class="abs tx" style="left:443.50px;top:599.65px;font-size:14px;line-height:14px;color:#409eff;letter-spacing:-0.373px;font-weight:400;text-decoration:underline;text-underline-offset:1.5px">Heatmap_of_Bococizumab.H.png</span>
<span class="abs tx" style="left:682.56px;top:599.65px;font-size:14px;line-height:14px;color:#4b4b4b;letter-spacing:-0.894px;font-weight:400;">1.09 MB</span>
<div class="abs btn" style="left:786px;top:591.80px;width:68px;height:29.3px"></div>
<svg class="abs" style="left:799.6px;top:602.10px" width="12" height="9" viewBox="0 0 12 9" fill="none" stroke="#fff" stroke-width="1.1"><path d="M0.6 4.4 C2 1.3 4 0.6 6 0.6 C8 0.6 10 1.3 11.4 4.4 C10 7.5 8 8.2 6 8.2 C4 8.2 2 7.5 0.6 4.4Z"/><circle cx="6" cy="4.4" r="1.9"/></svg>
<span class="abs tx" style="left:815.31px;top:600.94px;font-size:12px;line-height:12px;color:#fff;letter-spacing:-0.181px;font-weight:400;-webkit-text-stroke:0.25px #fff">View</span>
<div class="abs btn" style="left:863px;top:591.80px;width:68px;height:29.3px"></div>
<svg class="abs" style="left:877.7px;top:601.50px" width="10.5" height="10.5" viewBox="0 0 10.5 10.5" fill="none" stroke="#fff" stroke-width="1.05"><path d="M0.6 0.6 H8.6 L9.9 1.9 V9.9 H0.6Z"/><path d="M2.6 0.6 V4.2 H7.6 V0.6 M2.6 9.9 V6.3 H7.9 V9.9"/><path d="M5.8 1.6 V3.2"/></svg>
<span class="abs tx" style="left:892.41px;top:600.94px;font-size:12px;line-height:12px;color:#fff;letter-spacing:-0.672px;font-weight:400;-webkit-text-stroke:0.25px #fff">Save</span>
<div class="abs btn" style="left:940px;top:591.80px;width:95px;height:29.3px"></div>
<svg class="abs" style="left:954.6px;top:602.30px" width="10" height="9" viewBox="0 0 10 9" fill="none" stroke="#fff" stroke-width="1.1"><path d="M5 0.3 V5.8 M1.8 3.2 L5 6.2 L8.2 3.2 M0.5 8.3 H9.5"/></svg>
<span class="abs tx" style="left:969.01px;top:600.94px;font-size:12px;line-height:12px;color:#fff;letter-spacing:-0.075px;font-weight:400;-webkit-text-stroke:0.25px #fff">Download</span>
<span class="abs tx" style="left:218.30px;top:638.90px;font-size:14px;line-height:14px;color:#4b4b4b;letter-spacing:-0.445px;font-weight:400;">Heatmap_of_Bococizumab.L</span>
<span class="abs tx" style="left:443.50px;top:638.90px;font-size:14px;line-height:14px;color:#409eff;letter-spacing:-0.394px;font-weight:400;text-decoration:underline;text-underline-offset:1.5px">Heatmap_of_Bococizumab.L.png</span>
<span class="abs tx" style="left:676.73px;top:638.90px;font-size:14px;line-height:14px;color:#4b4b4b;letter-spacing:-0.872px;font-weight:400;">799.05 KB</span>
<div class="abs btn" style="left:786px;top:631.05px;width:68px;height:29.3px"></div>
<svg class="abs" style="left:799.6px;top:641.35px" width="12" height="9" viewBox="0 0 12 9" fill="none" stroke="#fff" stroke-width="1.1"><path d="M0.6 4.4 C2 1.3 4 0.6 6 0.6 C8 0.6 10 1.3 11.4 4.4 C10 7.5 8 8.2 6 8.2 C4 8.2 2 7.5 0.6 4.4Z"/><circle cx="6" cy="4.4" r="1.9"/></svg>
<span class="abs tx" style="left:815.31px;top:640.19px;font-size:12px;line-height:12px;color:#fff;letter-spacing:-0.181px;font-weight:400;-webkit-text-stroke:0.25px #fff">View</span>
<div class="abs btn" style="left:863px;top:631.05px;width:68px;height:29.3px"></div>
<svg class="abs" style="left:877.7px;top:640.75px" width="10.5" height="10.5" viewBox="0 0 10.5 10.5" fill="none" stroke="#fff" stroke-width="1.05"><path d="M0.6 0.6 H8.6 L9.9 1.9 V9.9 H0.6Z"/><path d="M2.6 0.6 V4.2 H7.6 V0.6 M2.6 9.9 V6.3 H7.9 V9.9"/><path d="M5.8 1.6 V3.2"/></svg>
<span class="abs tx" style="left:892.41px;top:640.19px;font-size:12px;line-height:12px;color:#fff;letter-spacing:-0.672px;font-weight:400;-webkit-text-stroke:0.25px #fff">Save</span>
<div class="abs btn" style="left:940px;top:631.05px;width:95px;height:29.3px"></div>
<svg class="abs" style="left:954.6px;top:641.55px" width="10" height="9" viewBox="0 0 10 9" fill="none" stroke="#fff" stroke-width="1.1"><path d="M5 0.3 V5.8 M1.8 3.2 L5 6.2 L8.2 3.2 M0.5 8.3 H9.5"/></svg>
<span class="abs tx" style="left:969.01px;top:640.19px;font-size:12px;line-height:12px;color:#fff;letter-spacing:-0.075px;font-weight:400;-webkit-text-stroke:0.25px #fff">Download</span>
<span class="abs tx" style="left:218.30px;top:678.15px;font-size:14px;line-height:14px;color:#4b4b4b;letter-spacing:-0.370px;font-weight:400;">Heatmap_of_Natalizumab.H</span>
<span class="abs tx" style="left:443.50px;top:678.15px;font-size:14px;line-height:14px;color:#409eff;letter-spacing:-0.297px;font-weight:400;text-decoration:underline;text-underline-offset:1.5px">Heatmap_of_Natalizumab.H.png</span>
<span class="abs tx" style="left:683.01px;top:678.15px;font-size:14px;line-height:14px;color:#4b4b4b;letter-spacing:-0.876px;font-weight:400;">1.11 MB</span>
<div class="abs btn" style="left:786px;top:670.30px;width:68px;height:29.3px"></div>
<svg class="abs" style="left:799.6px;top:680.60px" width="12" height="9" viewBox="0 0 12 9" fill="none" stroke="#fff" stroke-width="1.1"><path d="M0.6 4.4 C2 1.3 4 0.6 6 0.6 C8 0.6 10 1.3 11.4 4.4 C10 7.5 8 8.2 6 8.2 C4 8.2 2 7.5 0.6 4.4Z"/><circle cx="6" cy="4.4" r="1.9"/></svg>
<span class="abs tx" style="left:815.31px;top:679.44px;font-size:12px;line-height:12px;color:#fff;letter-spacing:-0.181px;font-weight:400;-webkit-text-stroke:0.25px #fff">View</span>
<div class="abs btn" style="left:863px;top:670.30px;width:68px;height:29.3px"></div>
<svg class="abs" style="left:877.7px;top:680.00px" width="10.5" height="10.5" viewBox="0 0 10.5 10.5" fill="none" stroke="#fff" stroke-width="1.05"><path d="M0.6 0.6 H8.6 L9.9 1.9 V9.9 H0.6Z"/><path d="M2.6 0.6 V4.2 H7.6 V0.6 M2.6 9.9 V6.3 H7.9 V9.9"/><path d="M5.8 1.6 V3.2"/></svg>
<span class="abs tx" style="left:892.41px;top:679.44px;font-size:12px;line-height:12px;color:#fff;letter-spacing:-0.672px;font-weight:400;-webkit-text-stroke:0.25px #fff">Save</span>
<div class="abs btn" style="left:940px;top:670.30px;width:95px;height:29.3px"></div>
<svg class="abs" style="left:954.6px;top:680.80px" width="10" height="9" viewBox="0 0 10 9" fill="none" stroke="#fff" stroke-width="1.1"><path d="M5 0.3 V5.8 M1.8 3.2 L5 6.2 L8.2 3.2 M0.5 8.3 H9.5"/></svg>
<span class="abs tx" style="left:969.01px;top:679.44px;font-size:12px;line-height:12px;color:#fff;letter-spacing:-0.075px;font-weight:400;-webkit-text-stroke:0.25px #fff">Download</span>
<span class="abs tx" style="left:218.30px;top:717.40px;font-size:14px;line-height:14px;color:#4b4b4b;letter-spacing:-0.369px;font-weight:400;">Heatmap_of_Natalizumab.L</span>
<span class="abs tx" style="left:443.50px;top:717.40px;font-size:14px;line-height:14px;color:#409eff;letter-spacing:-0.328px;font-weight:400;text-decoration:underline;text-underline-offset:1.5px">Heatmap_of_Natalizumab.L.png</span>
<span class="abs tx" style="left:676.73px;top:717.40px;font-size:14px;line-height:14px;color:#4b4b4b;letter-spacing:-0.872px;font-weight:400;">707.75 KB</span>
<div class="abs btn" style="left:786px;top:709.55px;width:68px;height:29.3px"></div>
<svg class="abs" style="left:799.6px;top:719.85px" width="12" height="9" viewBox="0 0 12 9" fill="none" stroke="#fff" stroke-width="1.1"><path d="M0.6 4.4 C2 1.3 4 0.6 6 0.6 C8 0.6 10 1.3 11.4 4.4 C10 7.5 8 8.2 6 8.2 C4 8.2 2 7.5 0.6 4.4Z"/><circle cx="6" cy="4.4" r="1.9"/></svg>
<span class="abs tx" style="left:815.31px;top:718.69px;font-size:12px;line-height:12px;color:#fff;letter-spacing:-0.181px;font-weight:400;-webkit-text-stroke:0.25px #fff">View</span>
<div class="abs btn" style="left:863px;top:709.55px;width:68px;height:29.3px"></div>
<svg class="abs" style="left:877.7px;top:719.25px" width="10.5" height="10.5" viewBox="0 0 10.5 10.5" fill="none" stroke="#fff" stroke-width="1.05"><path d="M0.6 0.6 H8.6 L9.9 1.9 V9.9 H0.6Z"/><path d="M2.6 0.6 V4.2 H7.6 V0.6 M2.6 9.9 V6.3 H7.9 V9.9"/><path d="M5.8 1.6 V3.2"/></svg>
<span class="abs tx" style="left:892.41px;top:718.69px;font-size:12px;line-height:12px;color:#fff;letter-spacing:-0.672px;font-weight:400;-webkit-text-stroke:0.25px #fff">Save</span>
<div class="abs btn" style="left:940px;top:709.55px;width:95px;height:29.3px"></div>
<svg class="abs" style="left:954.6px;top:720.05px" width="10" height="9" viewBox="0 0 10 9" fill="none" stroke="#fff" stroke-width="1.1"><path d="M5 0.3 V5.8 M1.8 3.2 L5 6.2 L8.2 3.2 M0.5 8.3 H9.5"/></svg>
<span class="abs tx" style="left:969.01px;top:718.69px;font-size:12px;line-height:12px;color:#fff;letter-spacing:-0.075px;font-weight:400;-webkit-text-stroke:0.25px #fff">Download</span>
<span class="abs tx" style="left:218.30px;top:756.65px;font-size:14px;line-height:14px;color:#4b4b4b;letter-spacing:-0.053px;font-weight:400;">Log</span>
<span class="abs tx" style="left:443.50px;top:756.65px;font-size:14px;line-height:14px;color:#4b4b4b;letter-spacing:0.149px;font-weight:400;">stdout.txt</span>
<span class="abs tx" style="left:692.14px;top:756.65px;font-size:14px;line-height:14px;color:#4b4b4b;letter-spacing:-0.911px;font-weight:400;">0 KB</span>
<span class="abs tx" style="left:218.30px;top:795.90px;font-size:14px;line-height:14px;color:#4b4b4b;letter-spacing:-0.185px;font-weight:400;">Error</span>
<span class="abs tx" style="left:443.50px;top:795.90px;font-size:14px;line-height:14px;color:#4b4b4b;letter-spacing:0.061px;font-weight:400;">stderr.txt</span>
<span class="abs tx" style="left:692.14px;top:795.90px;font-size:14px;line-height:14px;color:#4b4b4b;letter-spacing:-0.911px;font-weight:400;">0 KB</span>
</body></html>
